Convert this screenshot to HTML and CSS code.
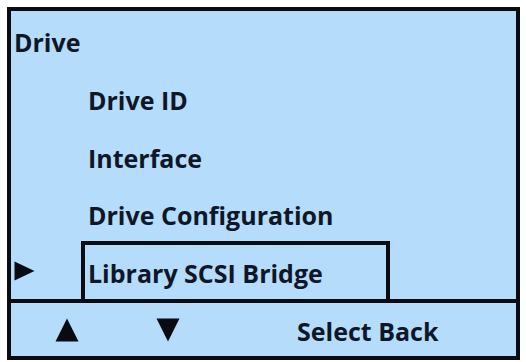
FILE: index.html
```html
<!DOCTYPE html>
<html>
<head>
<meta charset="utf-8">
<link rel="stylesheet" href="styles.css">
</head>
<body>
<div class="screen">
  <div class="main">
    <div class="row title-row"><span class="title">Drive</span></div>
    <div class="row"><span class="marker"></span><span class="label">Drive ID</span></div>
    <div class="row"><span class="marker"></span><span class="label">Interface</span></div>
    <div class="row short"><span class="marker"></span><span class="label">Drive Configuration</span></div>
    <div class="row selected">
      <span class="marker"><svg width="21" height="20" viewBox="0 0 21 20"><polygon points="0.5,0.5 20.5,10 0.5,19.5" fill="#0a0a12"/></svg></span>
      <span class="label boxed">Library SCSI Bridge</span>
    </div>
  </div>
  <div class="footer">
    <span class="key up"><svg width="24" height="24" viewBox="0 0 24 24"><polygon points="12,0.5 23.5,23.5 0.5,23.5" fill="#0a0a12"/></svg></span>
    <span class="key down"><svg width="24" height="24" viewBox="0 0 24 24"><polygon points="0.5,0.5 23.5,0.5 12,23.5" fill="#0a0a12"/></svg></span>
    <span class="actions">Select Back</span>
  </div>
</div>
</body>
</html>
```
FILE: styles.css
```css
html, body {
  margin: 0;
  padding: 0;
  background: #ffffff;
}
.screen {
  margin: 7px 0 0 7px;
  width: 505px;
  height: 345px;
  border: 4px solid #0b0b12;
  background: #b5dcfa;
  display: flex;
  flex-direction: column;
  font-family: "Open Sans", Lato, sans-serif;
  font-weight: 700;
  font-size: 25px;
  color: #0e1728;
}
.main {
  height: 288px;
  display: flex;
  flex-direction: column;
}
.row {
  height: 58px;
  display: flex;
  align-items: center;
}
.row.short {
  height: 56px;
}
.title {
  padding-left: 3px;
  padding-top: 3px;
}
.marker {
  width: 70px;
  display: flex;
  align-items: center;
  padding-left: 3px;
  padding-top: 2px;
  box-sizing: border-box;
}
.marker svg {
  display: block;
}
.label {
  padding-left: 7px;
  padding-top: 3px;
}
.selected {
  align-items: stretch;
}
.boxed {
  width: 298px;
  border: 4px solid #0b0b12;
  border-bottom: none;
  padding-left: 3px;
  padding-top: 1px;
  display: flex;
  align-items: center;
}
.footer {
  flex: 1;
  border-top: 4px solid #0b0b12;
  display: flex;
  align-items: center;
}
.key svg {
  display: block;
}
.up {
  margin-left: 44px;
}
.down {
  margin-left: 77px;
}
.actions {
  margin-left: 117px;
  padding-top: 2px;
}
```
